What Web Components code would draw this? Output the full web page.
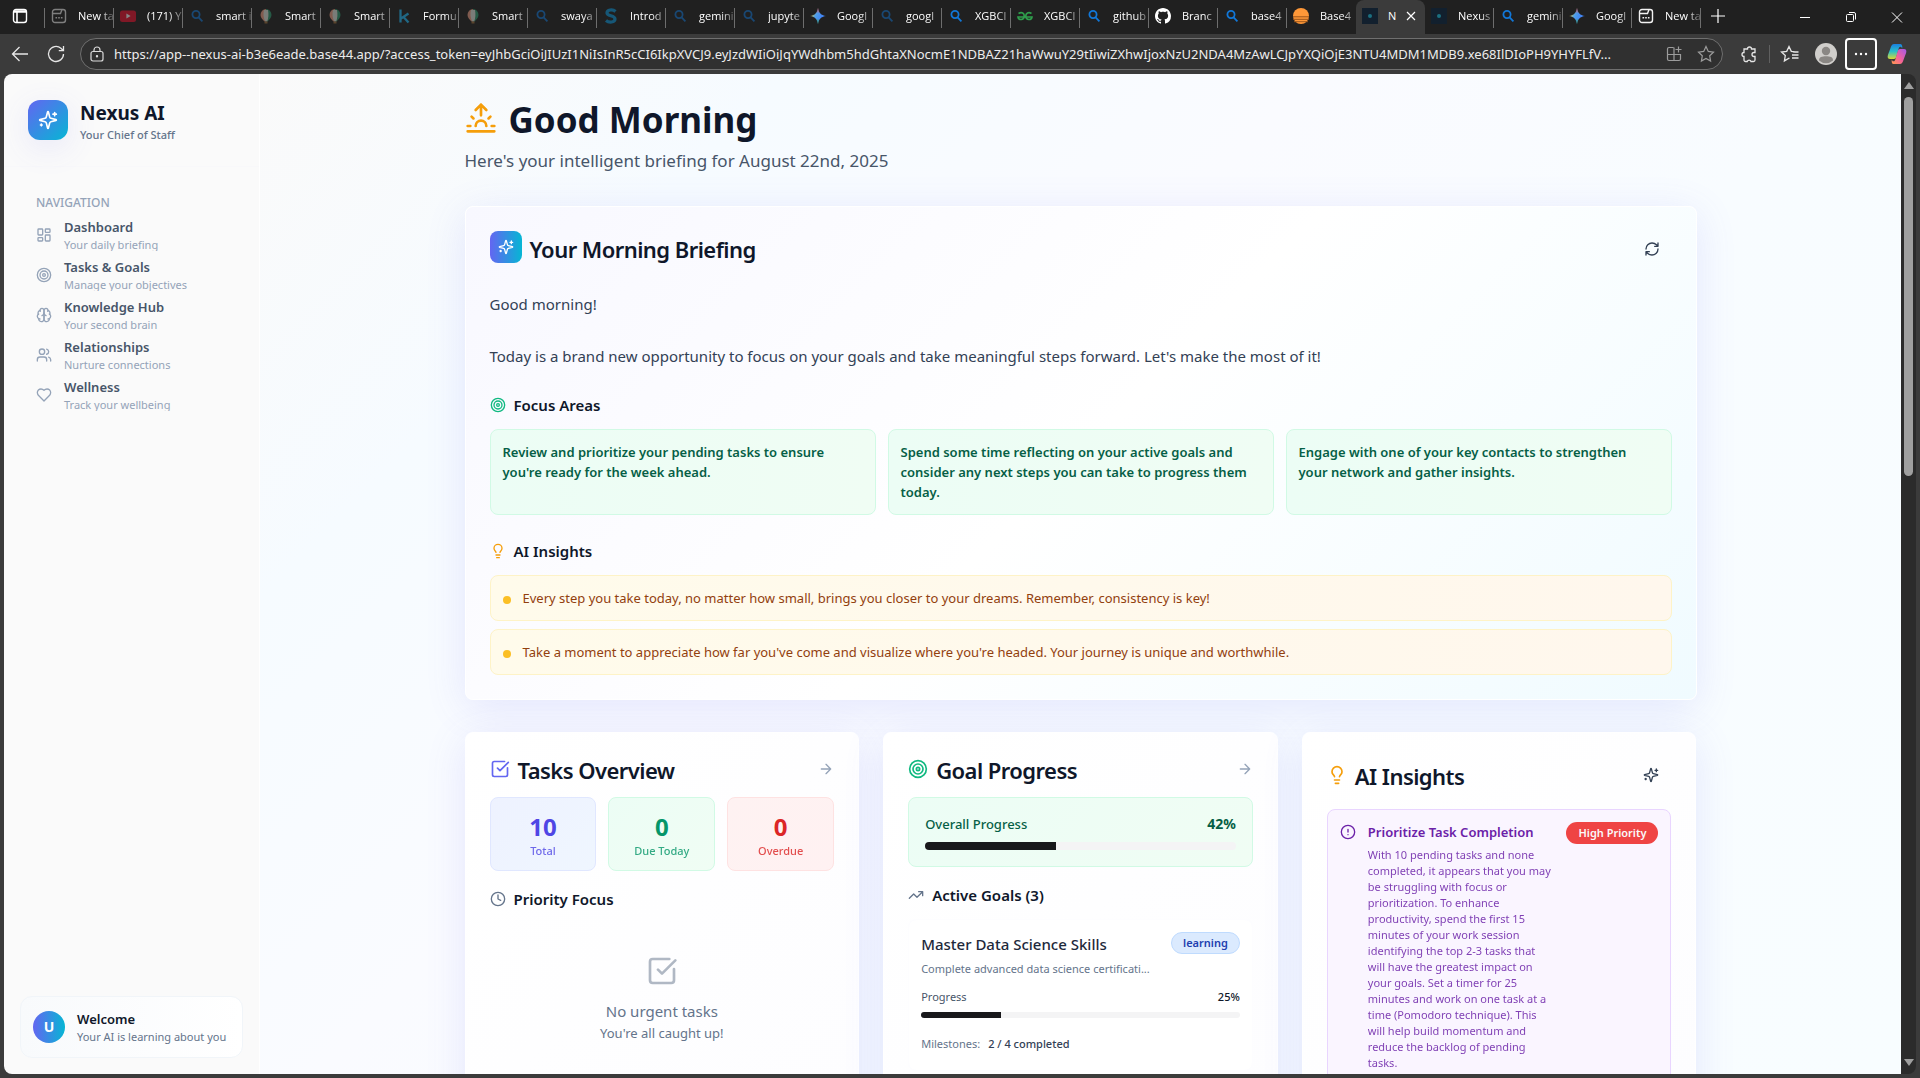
<!DOCTYPE html>
<html lang="en">
<head>
<meta charset="utf-8">
<title>Nexus AI</title>
<style>
html,body{margin:0;height:100%;overflow:hidden;background:#3b3b3b}
body{font-family:"Noto Sans","Open Sans",sans-serif;font-size:14px;line-height:20px;color:#0f172a}
</style>
</head>
<body>
<browser-window></browser-window>
<script>
const RESET = '*{box-sizing:border-box}h1,h2,h3,h4,p,ul{margin:0;padding:0}ul{list-style:none}button{font:inherit;color:inherit;background:none;border:0;padding:0;margin:0}a{color:inherit;text-decoration:none}:host([hidden]){display:none}';
function define(name, css, html){
  customElements.define(name, class extends HTMLElement{
    constructor(){
      super();
      const markup = typeof html === 'function' ? html(this) : html;
      this.attachShadow({mode:'open'}).innerHTML = '<style>'+RESET+css+'</style>'+markup;
    }
  });
}

const ICONS = {
  sparkles:'<path d="M9.937 15.5A2 2 0 0 0 8.5 14.063l-6.135-1.582a.5.5 0 0 1 0-.962L8.5 9.936A2 2 0 0 0 9.937 8.5l1.582-6.135a.5.5 0 0 1 .963 0L14.063 8.5A2 2 0 0 0 15.5 9.937l6.135 1.581a.5.5 0 0 1 0 .964L15.5 14.063a2 2 0 0 0-1.437 1.437l-1.582 6.135a.5.5 0 0 1-.963 0z"/><path d="M20 3v4M22 5h-4M4 17v2M5 18H3"/>',
  dashboard:'<rect x="3" y="3" width="7" height="9" rx="1"/><rect x="14" y="3" width="7" height="5" rx="1"/><rect x="14" y="12" width="7" height="9" rx="1"/><rect x="3" y="16" width="7" height="5" rx="1"/>',
  target:'<circle cx="12" cy="12" r="10"/><circle cx="12" cy="12" r="6"/><circle cx="12" cy="12" r="2"/>',
  brain:'<path d="M12 5a3 3 0 1 0-5.997.125 4 4 0 0 0-2.526 5.77 4 4 0 0 0 .556 6.588A4 4 0 1 0 12 18Z"/><path d="M12 5a3 3 0 1 1 5.997.125 4 4 0 0 1 2.526 5.77 4 4 0 0 1-.556 6.588A4 4 0 1 1 12 18Z"/><path d="M15 13a4.5 4.5 0 0 1-3-4 4.5 4.5 0 0 1-3 4M17.599 6.5a3 3 0 0 0 .399-1.375M6.003 5.125A3 3 0 0 0 6.401 6.5M3.477 10.896a4 4 0 0 1 .585-.396M19.938 10.5a4 4 0 0 1 .585.396M6 18a4 4 0 0 1-1.967-.516M19.967 17.484A4 4 0 0 1 18 18"/>',
  users:'<path d="M16 21v-2a4 4 0 0 0-4-4H6a4 4 0 0 0-4 4v2"/><circle cx="9" cy="7" r="4"/><path d="M22 21v-2a4 4 0 0 0-3-3.87M16 3.13a4 4 0 0 1 0 7.75"/>',
  heart:'<path d="M19 14c1.49-1.46 3-3.21 3-5.5A5.5 5.5 0 0 0 16.5 3c-1.76 0-3 .5-4.5 2-1.5-1.5-2.74-2-4.5-2A5.5 5.5 0 0 0 2 8.5c0 2.3 1.5 4.05 3 5.5l7 7Z"/>',
  sunrise:'<path d="M12 2v8M4.93 10.93l1.41 1.41M2 18h2M20 18h2M19.07 10.93l-1.41 1.41M22 22H2M8 6l4-4 4 4M16 18a4 4 0 0 0-8 0"/>',
  refresh:'<path d="M3 12a9 9 0 0 1 9-9 9.75 9.75 0 0 1 6.74 2.74L21 8M21 3v5h-5M21 12a9 9 0 0 1-9 9 9.75 9.75 0 0 1-6.74-2.74L3 16M8 16H3v5"/>',
  bulb:'<path d="M15 14c.2-1 .7-1.7 1.5-2.5 1-.9 1.5-2.2 1.5-3.5A6 6 0 0 0 6 8c0 1 .2 2.2 1.5 3.5.7.7 1.3 1.5 1.5 2.5M9 18h6M10 22h4"/>',
  check:'<path d="M21 10.5V19a2 2 0 0 1-2 2H5a2 2 0 0 1-2-2V5a2 2 0 0 1 2-2h12.5M9 11l3 3L22 4"/>',
  clock:'<circle cx="12" cy="12" r="10"/><path d="M12 6v6l4 2"/>',
  trend:'<path d="M22 7l-8.5 8.5-5-5L2 17M16 7h6v6"/>',
  alert:'<circle cx="12" cy="12" r="10"/><path d="M12 8v4M12 16h.01"/>',
  arrow:'<path d="M5 12h14M12 5l7 7-7 7"/>'
};
define('line-icon', ':host{display:block;flex:none;width:16px;height:16px}:host([size="20"]){width:20px;height:20px}:host([size="32"]){width:32px;height:32px}svg{display:block;width:100%;height:100%;fill:none;stroke:currentColor;stroke-width:2;stroke-linecap:round;stroke-linejoin:round}',
  el => '<svg viewBox="0 0 24 24" aria-hidden="true">'+ICONS[el.getAttribute('name')]+'</svg>');

/* ---------- browser chrome ---------- */
const FAVICONS = {
  page:'<g fill="none" stroke="currentColor" stroke-width="1.4"><rect x="1.5" y="1.5" width="13" height="13" rx="2.5"/><path d="M2 5.5h7.5l1.500-4"/></g><path d="M4.500 9h1.600v1.600H4.500zM7.200 9h1.600v1.600H7.200zM9.900 9h1.600v1.600H9.900z" fill="currentColor"/>',
  youtube:'<rect y="2.5" width="16" height="11.5" rx="2.5" fill="#f5102f"/><path d="M6.4 5.6v5l4.2-2.5z" fill="#fff"/>',
  search:'<g fill="none" stroke="#1177d8" stroke-width="1.8"><circle cx="7" cy="6.5" r="3.6"/><path d="M9.6 9.3l3.8 4"/></g>',
  balloon:'<path d="M8 1a5.5 6 0 0 0-5.5 6c0 3 2.6 5 4 6.5h1.5z" fill="#f7a488"/><path d="M8 1a5.5 6 0 0 1 5.5 6c0 3-2.6 5-4 6.5H8z" fill="#2f9f73"/><path d="M6 2c-1 4-.5 8 1.2 11.5h2C10.5 10 10.8 6 10 2z" fill="#e7ede3"/><rect x="6.5" y="13.5" width="3" height="2" fill="#a0703c"/>',
  kaggle:'<path d="M4.5 1.5v13M12.5 5.5l-7.5 5M7.500 9l5 5.500" stroke="#20beff" stroke-width="2.3" fill="none"/>',
  swirl:'<path d="M12.5 3.5C9.5.8 4 1.8 4 5c0 3.500 8 2 8 6 0 3.500-6 4-9 1.500" fill="none" stroke="#0a9be0" stroke-width="3.2"/>',
  gemini:'<defs><linearGradient id="g" x1="0" x2="1" y1=".3" y2=".7"><stop offset="0" stop-color="#fbbc04"/><stop offset=".35" stop-color="#4f9fe8"/><stop offset=".7" stop-color="#4285f4"/></linearGradient><linearGradient id="v" x1="0" x2="0" y1="0" y2="1"><stop offset="0" stop-color="#f44336"/><stop offset=".35" stop-color="#f44336" stop-opacity="0"/><stop offset=".65" stop-color="#34a853" stop-opacity="0"/><stop offset="1" stop-color="#34a853"/></linearGradient></defs><path d="M8 0c.8 5 3 7.200 8 8-5 .8-7.200 3-8 8-.8-5-3-7.200-8-8 5-.8 7.200-3 8-8z" fill="url(#g)"/><path d="M8 0c.8 5 3 7.200 8 8-5 .8-7.200 3-8 8-.8-5-3-7.200-8-8 5-.8 7.200-3 8-8z" fill="url(#v)"/>',
  geeks:'<path d="M1.500 5.500C5 3.500 7.300 5.500 7.200 8c0 4.500-6 4.500-6.200 1h14c-.2 3.500-6.200 3.500-6.200-1 0-2.500 2.500-4.500 5.700-2.500" fill="none" stroke="#2f9e4c" stroke-width="1.7"/>',
  github:'<path fill="#fff" d="M8 0C3.580 0 0 3.580 0 8c0 3.540 2.290 6.530 5.470 7.590.4.070.55-.17.550-.380 0-.190-.010-.820-.010-1.490-2.010.370-2.530-.490-2.690-.940-.090-.230-.480-.940-.820-1.130-.280-.150-.680-.520-.010-.530.630-.010 1.080.580 1.230.820.720 1.210 1.870.870 2.330.660.070-.520.280-.870.510-1.070-1.780-.2-3.640-.890-3.640-3.950 0-.870.310-1.590.820-2.150-.080-.2-.360-1.020.080-2.120 0 0 .670-.210 2.200.820.640-.180 1.320-.270 2-.270s1.360.090 2 .270c1.530-1.040 2.200-.820 2.200-.820.440 1.100.160 1.920.080 2.120.510.560.820 1.270.820 2.150 0 3.070-1.870 3.750-3.650 3.950.290.250.540.730.540 1.480 0 1.070-.010 1.930-.010 2.200 0 .210.150.460.550.380A8.010 8.010 0 0 0 16 8c0-4.420-3.580-8-8-8z"/>',
  base:'<circle cx="8" cy="8" r="8" fill="#ff9838"/><path d="M0 8.800h16M0 11.300h16M1 13.700h14" stroke="#9c551b" stroke-width="1"/>',
  nexus:'<rect width="16" height="16" fill="#12202e"/><circle cx="8" cy="8" r="2" fill="#1c6f80"/>'
};
define('browser-tab', `
:host{display:flex;flex:0 0 69px;align-items:center;gap:11px;height:34px;padding:0 0 2px 6px;overflow:hidden;background:linear-gradient(#6e6e6e,#6e6e6e) right 8px/1px 20px no-repeat;font-family:"Open Sans","Noto Sans",sans-serif;font-size:11px;line-height:20px;color:#fff}
:host([active]){background:#3b3b3b;border-radius:8px 8px 0 0;gap:10px}
:host([plain]){background:none}
svg{flex:none;width:16px;height:16px;display:block;color:#f2f2f2}
:host([asleep]) svg{opacity:.45}
a{flex:1;min-width:0;white-space:nowrap;-webkit-mask:linear-gradient(90deg,#000 60%,rgba(0,0,0,.2))}
:host([active]) a{flex:none;-webkit-mask:none}
button{display:none;width:10px;height:10px}
:host([active]) button{display:block}
button svg{width:10px;height:10px}`,
el => '<svg viewBox="0 0 16 16">'+FAVICONS[el.getAttribute('icon')]+'</svg><a href="#"><slot></slot></a><button aria-label="Close tab"><svg viewBox="0 0 10 10"><path d="M1 1l8 8M9 1L1 9" stroke="#fff" stroke-width="1.2"/></svg></button>');

const TABS = [['page','New ta','asleep'],['youtube','(171) Y','asleep'],['search','smart i','asleep'],['balloon','Smart','asleep'],['balloon','Smart','asleep'],['kaggle','Formu','asleep'],['balloon','Smart','asleep'],['search','swaya','asleep'],['swirl','Introd','asleep'],['search','gemini','asleep'],['search','jupyte','asleep'],['gemini','Googl',''],['search','googl','asleep'],['search','XGBCl',''],['geeks','XGBCl',''],['search','github',''],['github','Branc',''],['search','base4',''],['base','Base4','plain'],['nexus','N','active'],['nexus','Nexus',''],['search','gemini',''],['gemini','Googl',''],['page','New ta','']];
define('tab-strip', `
:host{display:flex;height:34px;background:#202020;align-items:center}
.side{flex:none;width:45px;height:34px;display:grid;align-items:center;background:linear-gradient(#6e6e6e,#6e6e6e) right 8px/1px 20px no-repeat;padding:0 0 2px 12px}
svg{display:block;width:16px;height:16px;fill:none;stroke:#fff}
.new{width:34px;height:34px;display:grid;place-items:center;padding-bottom:2px}
.win{margin-left:auto;display:flex}
.win button{width:46px;height:34px;display:grid;place-items:center}`,
`<button class="side" aria-label="Tab actions"><svg viewBox="0 0 16 16"><rect x="1.5" y="1.5" width="13" height="13" rx="2.5" stroke-width="1.4"/><path d="M1.5 4h13M2 3h12M5 4v10" stroke-width="1.6"/></svg></button>`
+TABS.map(t=>`<browser-tab icon="${t[0]}" ${t[2]}>${t[1]}</browser-tab>`).join('')+
`<button class="new" aria-label="New tab"><svg viewBox="0 0 16 16"><path d="M8 1v14M1 8h14" stroke-width="1.2"/></svg></button>
<div class="win"><button aria-label="Minimize"><svg viewBox="0 0 16 16"><path d="M3 8.5h10"/></svg></button><button aria-label="Restore"><svg viewBox="0 0 16 16"><rect x="3.5" y="5.5" width="7" height="7" rx="1"/><path d="M6 3.5h5a1.500 1.500 0 0 1 1.500 1.500v5.500"/></svg></button><button aria-label="Close"><svg viewBox="0 0 16 16"><path d="M3 3.5l10 10M13 3.5l-10 10"/></svg></button></div>`);

const URL_TEXT = 'https://app--nexus-ai-b3e6eade.base44.app/?access_token=eyJhbGciOiJIUzI1NiIsInR5cCI6IkpXVCJ9.eyJzdWIiOiJqYWdhbm5hdGhtaXNocmE1NDBAZ21haWwuY29tIiwiZXhwIjoxNzU2NDA4MzAwLCJpYXQiOjE3NTU4MDM1MDB9.xe68IlDIoPH9YHYFLfV...';
define('address-bar', `
:host{display:flex;height:40px;align-items:center;background:#3b3b3b;padding:0 6px 0 2px}
svg{display:block;fill:none;stroke:#e6e6e6;stroke-width:1.3;width:20px;height:20px}
button{flex:none;width:36px;height:32px;display:grid;place-items:center}
form{flex:1;min-width:0;height:32px;border:1px solid #6f6f6f;border-radius:16px;background:#303030;display:flex;align-items:center;margin:0 8px 0 6px}
form button{width:32px}
form svg{stroke:#9c9c9c;stroke-width:1.2}
form .lock svg{stroke:#dadada}
input{flex:1;min-width:0;border:0;outline:0;padding:0;margin:0 6px 0 1px;background:none;color:#ededed;font:13px/20px "Noto Sans","Open Sans",sans-serif;height:24px}
.sep{width:1px;height:18px;background:#606060;margin:0 2px}
.menu{border:2px solid #fff;border-radius:4px;width:32px;margin:0 3px 0 1px}
.pilot{width:34px}
.who svg{width:22px;height:22px}`,
`<button aria-label="Back"><svg viewBox="0 0 20 20"><path d="M18 10H2.500M9.500 3l-7 7 7 7"/></svg></button>
<button aria-label="Refresh"><svg viewBox="0 0 20 20"><path d="M17.500 10a7.500 7.500 0 1 1-2.600-5.700L17.300 6.500M17.500 2v4.700h-4.700"/></svg></button>
<form><button class="lock" type="button" aria-label="Site information"><svg viewBox="0 0 20 20"><rect x="4" y="7.5" width="12" height="9.5" rx="2"/><path d="M7 7.500V6a3 3 0 0 1 6 0v1.500"/><circle cx="10" cy="12.2" r=".6" fill="#dadada"/></svg></button>
<input type="text" aria-label="Address" value="${URL_TEXT}">
<button type="button" aria-label="Install app"><svg viewBox="0 0 20 20"><path d="M9.500 3.500H5A1.500 1.500 0 0 0 3.500 5v10A1.500 1.500 0 0 0 5 16.500h10a1.500 1.500 0 0 0 1.500-1.500v-4.500h-13M10 3.500v13M14.500 2.500v6M11.500 5.500h6"/></svg></button>
<button type="button" aria-label="Add to favorites"><svg viewBox="0 0 20 20"><path d="M10 2.500l2.300 4.900 5.200.7-3.800 3.700.9 5.300-4.600-2.600-4.600 2.600.9-5.300L2.500 8.100l5.200-.7z"/></svg></button></form>
<button aria-label="Extensions"><svg viewBox="0 0 20 20"><path d="M5 5h3.500a2 2 0 1 1 4 0H16v3.500h-1a2 2 0 1 0 0 4h1V16a1.500 1.500 0 0 1-1.500 1.500H12a2 2 0 0 0-3.800 0H6.500A1.500 1.500 0 0 1 5 16v-3.500a2 2 0 1 1 0-4z"/></svg></button><span class="sep"></span>
<button aria-label="Favorites"><svg viewBox="0 0 20 20"><path d="M9.500 14.500l-.5-.2-4.600 2.600.9-5.300L1.500 8l5.200-.7L9 2.500l2.300 4.800 3.700.5M12 11h6.500M12 14h6.500M13 8h5.500"/></svg></button>
<button class="who" aria-label="Profile"><svg viewBox="0 0 22 22" stroke="none"><circle cx="11" cy="11" r="11" fill="#d0cecb" stroke="none"/><circle cx="11" cy="8" r="4.2" fill="#8a8784" stroke="none"/><path d="M4 17.500C4 14 7 13.300 11 13.300s7 .7 7 4.200a10.500 10.500 0 0 1-14 0z" fill="#8a8784" stroke="none"/></svg></button>
<button class="menu" aria-label="Settings and more"><svg viewBox="0 0 20 20"><g fill="#fff" stroke="none"><circle cx="5" cy="10" r="1.2"/><circle cx="10" cy="10" r="1.2"/><circle cx="15" cy="10" r="1.2"/></g></svg></button>
<button class="pilot" aria-label="Copilot"><svg viewBox="0 0 22 22"><defs><linearGradient id="a" x1="0" x2="0" y1="0" y2="1"><stop stop-color="#1a7fe0"/><stop offset=".5" stop-color="#2bc0c8"/><stop offset="1" stop-color="#d9d834"/></linearGradient><linearGradient id="b" x1="1" x2="0" y1="0" y2="1"><stop stop-color="#a259e8"/><stop offset=".55" stop-color="#f4619a"/><stop offset="1" stop-color="#ff9a4a"/></linearGradient></defs><path d="M15 0H8C5.500 0 4.500 2 3.700 5L1 12c-.8 2.700 0 4.500 2.500 4.500h4c2 0 2.600-1.800 3.300-4.500l1.900-6.500c.5-1.800 1-2.500 2-2.500 1.400 0 1.500 1 2 2C17.200 2.500 16.500 0 15 0z" fill="url(#a)" stroke="none"/><path d="M7 22h7c2.500 0 3.500-2 4.300-5L21 10c.8-2.700 0-4.500-2.500-4.500h-4c-2 0-2.600 1.800-3.300 4.500l-1.900 6.500c-.5 1.800-1 2.500-2 2.500-1.400 0-1.500-1-2-2C4.800 19.500 5.500 22 7 22z" fill="url(#b)" stroke="none"/></svg></button>`);

define('scroll-rail', `
:host{display:flex;flex-direction:column;align-items:center;width:15px;background:#2b2b2b;padding:8px 0}
i{width:0;height:0;border:5px solid transparent;flex:none}
.up{border-top:0;border-bottom:7px solid #9f9f9f}
.down{border-bottom:0;border-top:7px solid #9f9f9f;margin-top:auto}
.thumb{width:9px;flex:0 0 38.5%;border-radius:5px;background:#9f9f9f;margin-top:8px}`,
'<i class="up"></i><span class="thumb"></span><i class="down"></i>');

/* ---------- sidebar ---------- */
define('nav-item', `
:host{display:block;height:32px;margin-bottom:8px}
a{display:flex;align-items:center;gap:12px;height:32px;padding:0 12px;overflow:hidden}
line-icon{color:#94a3b8}
b{display:block;font-weight:600;font-size:13px;line-height:20px;color:#475569}
small{display:block;font-size:11px;line-height:16px;color:#94a3b8}
a>span{display:block}`,
el => `<a href="#"><line-icon name="${el.getAttribute('icon')}"></line-icon><span><b><slot></slot></b><small>${el.getAttribute('note')}</small></span></a>`);

define('app-sidebar', `
:host{display:flex;flex-direction:column;width:256px;flex:none;background:#fafafa;border-right:1px solid #fff}
header{display:flex;align-items:center;gap:12px;padding:24px;border-bottom:1px solid #f8f8fa}
.logo{width:40px;height:40px;border-radius:12px;display:grid;place-items:center;color:#fff;background:linear-gradient(135deg,#6366f1,#06b6d4);box-shadow:0 8px 32px rgba(99,102,241,.12)}
h2{font-size:19px;line-height:30px;font-weight:700}
header p{font-size:11px;line-height:14px;color:#64748b;font-weight:500}
nav{padding:20px;flex:1}
h3{font-size:12px;line-height:32px;padding:0 12px;font-weight:500;color:#94a3b8}
footer{padding:16px}
.card{display:flex;align-items:center;gap:12px;padding:12px;border:1px solid #f1f5f9;border-radius:12px;background:linear-gradient(90deg,#f8fafc,#fff)}
.avatar{flex:none;width:32px;height:32px;border-radius:50%;display:grid;place-items:center;color:#fff;font-weight:700;font-size:14px;background:linear-gradient(90deg,#6366f1,#06b6d4)}
.card b{display:block;font-size:13px;line-height:20px;font-weight:600}
.card small{display:block;font-size:11px;line-height:16px;color:#64748b;white-space:nowrap}`,
`<header><span class="logo"><line-icon name="sparkles" size="20"></line-icon></span><div><h2>Nexus AI</h2><p>Your Chief of Staff</p></div></header>
<nav><h3>NAVIGATION</h3>
<nav-item icon="dashboard" note="Your daily briefing">Dashboard</nav-item>
<nav-item icon="target" note="Manage your objectives">Tasks &amp; Goals</nav-item>
<nav-item icon="brain" note="Your second brain">Knowledge Hub</nav-item>
<nav-item icon="users" note="Nurture connections">Relationships</nav-item>
<nav-item icon="heart" note="Track your wellbeing">Wellness</nav-item></nav>
<footer><div class="card"><span class="avatar">U</span><div><b>Welcome</b><small>Your AI is learning about you</small></div></div></footer>`);

/* ---------- dashboard parts ---------- */
define('surface-card', `
:host{display:block;min-width:0;border:1px solid #fff;border-radius:8px;padding:24px;background:linear-gradient(135deg,#fff,#fdfdff);box-shadow:0 8px 40px rgba(99,102,241,.14)}
:host([tinted]){background:linear-gradient(135deg,#f8f8ff,#fff 50%,#f0fbff)}`, '<slot></slot>');

define('section-title', `
:host{display:flex;align-items:center;gap:8px;font-size:15px;line-height:24px;font-weight:600;color:#0f172a}
h3{font:inherit}line-icon{color:var(--tone,#64748b)}`,
el => `<line-icon name="${el.getAttribute('icon')}"></line-icon><h3><slot></slot></h3>`);

define('card-heading', `
:host{display:flex;align-items:flex-start}
h2{flex:1;height:24px;display:flex;align-items:center;gap:8px;font-size:22px;line-height:24px;font-weight:600;letter-spacing:-.025em;white-space:nowrap}
h2 span{padding-top:2px}
:host([tall]) h2{height:36px}
line-icon[size]{color:var(--tone)}
button,a{display:grid;place-items:center;width:16px;height:24px;color:#94a3b8}
:host([tall]) button{width:40px;height:36px;color:#334155}`,
el => `<h2><line-icon size="20" name="${el.getAttribute('icon')}"></line-icon><span><slot></slot></span></h2>`+
 (el.hasAttribute('tall') ? `<button aria-label="Generate insights"><line-icon name="sparkles"></line-icon></button>` : `<a href="#" aria-label="Open"><line-icon name="arrow"></line-icon></a>`));

define('focus-box', `
:host{display:block;padding:12px 20px 12px 12px;border:1px solid #d1fae5;border-radius:8px;background:linear-gradient(90deg,#ecfdf5,#f0fdf4);color:#065f46;font-size:13px;line-height:20px;font-weight:600}`, '<slot></slot>');

define('insight-row', `
:host{display:flex;align-items:flex-start;gap:12px;padding:12px;border:1px solid #fef3c7;border-radius:8px;background:linear-gradient(90deg,#fffbeb,#fff7ed);color:#92400e;font-size:13px;line-height:20px}
i{flex:none;width:8px;height:8px;margin-top:8px;border-radius:50%;background:#fbbf24}`, '<i></i><span><slot></slot></span>');

define('briefing-card', `
:host{display:block}
header{display:flex;align-items:flex-start;gap:8px;margin-bottom:24px}
.logo{width:32px;height:32px;border-radius:8px;display:grid;place-items:center;color:#fff;background:linear-gradient(90deg,#6366f1,#06b6d4)}
h2{flex:1;font-size:22px;line-height:36px;font-weight:600;letter-spacing:-.025em}
button{width:40px;height:36px;display:grid;place-items:center;color:#334155}
.text{font-size:15px;line-height:26px;color:#334155;white-space:pre-line;margin-bottom:24px}
section-title{margin-bottom:12px}
.focus{display:grid;grid-template-columns:repeat(3,1fr);gap:12px;margin-bottom:24px}
.rows{display:grid;gap:8px}
.green{--tone:#10b981}.amber{--tone:#f59e0b}`,
`<surface-card tinted><header><span class="logo"><line-icon name="sparkles"></line-icon></span><h2>Your Morning Briefing</h2><button aria-label="Refresh briefing"><line-icon name="refresh"></line-icon></button></header>
<p class="text">Good morning!

Today is a brand new opportunity to focus on your goals and take meaningful steps forward. Let's make the most of it!</p>
<section-title class="green" icon="target">Focus Areas</section-title>
<div class="focus"><focus-box>Review and prioritize your pending tasks to ensure you're ready for the week ahead.</focus-box><focus-box>Spend some time reflecting on your active goals and consider any next steps you can take to progress them today.</focus-box><focus-box>Engage with one of your key contacts to strengthen your network and gather insights.</focus-box></div>
<section-title class="amber" icon="bulb">AI Insights</section-title>
<div class="rows"><insight-row>Every step you take today, no matter how small, brings you closer to your dreams. Remember, consistency is key!</insight-row><insight-row>Take a moment to appreciate how far you've come and visualize where you're headed. Your journey is unique and worthwhile.</insight-row></div></surface-card>`);

define('stat-tile', `
:host{display:block;padding:12px;border:1px solid var(--edge);border-radius:8px;background:var(--fill);text-align:center;color:var(--ink)}
b{display:block;font-size:24px;line-height:34px;font-weight:700}
span{display:block;font-size:11px;line-height:14px;font-weight:500;opacity:.8}
:host([tone=indigo]){--edge:#e0e7ff;--fill:linear-gradient(135deg,#eef2ff,#eff6ff);--ink:#4f46e5}
:host([tone=green]){--edge:#d1fae5;--fill:linear-gradient(135deg,#ecfdf5,#f0fdf4);--ink:#059669}
:host([tone=red]){--edge:#fee2e2;--fill:linear-gradient(135deg,#fef2f2,#fff1f2);--ink:#dc2626}`,
el => `<b>${el.getAttribute('value')}</b><span><slot></slot></span>`);

define('tasks-card', `
:host{display:grid}
.stats{display:grid;grid-template-columns:repeat(3,1fr);gap:12px;margin:16px 0}
card-heading{--tone:#6366f1}
.empty{display:flex;flex-direction:column;align-items:center;padding:32px 0;margin-top:12px;color:#64748b;text-align:center}
.empty line-icon{opacity:.5;margin-bottom:12px}
.empty p{font-size:15px;line-height:24px}.empty small{font-size:13px;line-height:20px}`,
`<surface-card><card-heading icon="check">Tasks Overview</card-heading>
<div class="stats"><stat-tile tone="indigo" value="10">Total</stat-tile><stat-tile tone="green" value="0">Due Today</stat-tile><stat-tile tone="red" value="0">Overdue</stat-tile></div>
<section-title icon="clock">Priority Focus</section-title>
<div class="empty"><line-icon name="check" size="32"></line-icon><p>No urgent tasks</p><small>You're all caught up!</small></div></surface-card>`);

define('progress-bar', `
:host{display:block;height:8px;border-radius:4px;overflow:hidden;background:#f4f4f5}
:host([thin]){height:6px}
i{display:block;height:100%;background:#18181b}`,
el => `<i role="progressbar" aria-valuenow="${el.getAttribute('value')}" style="width:${el.getAttribute('value')}%"></i>`);

define('goals-card', `
:host{display:grid}
card-heading{--tone:#10b981}
.overall{margin:16px 0;padding:16px;border:1px solid #d1fae5;border-radius:8px;background:linear-gradient(135deg,#ecfdf5,#f0fdf4);color:#065f46}
.line{display:flex;justify-content:space-between;align-items:center}
.overall .line{font-size:13px;line-height:20px;font-weight:500;margin-bottom:8px}
.overall b{font-size:14px;font-weight:700}
.goal{margin-top:12px;padding:12px;border:1px solid #fdfdff;border-radius:8px;background:#fff}
.goal .line{align-items:flex-start}
h4{font-size:15px;line-height:24px;font-weight:500;color:#1e293b}
.badge{padding:2px 11px;border:1px solid #bfdbfe;border-radius:11px;background:#dbeafe;color:#1e40af;font-size:11px;line-height:16px;font-weight:600}
.note{margin:5px 0 12px;font-size:11px;line-height:16px;color:#64748b}
.small{font-size:11px;line-height:16px;color:#475569;margin-bottom:7px}
.small b{font-weight:500;color:#0f172a}
.miles{display:flex;align-items:center;gap:8px;height:28px;margin-top:12px;font-size:11px;color:#64748b}
.miles b{font-weight:500;color:#334155}`,
`<surface-card><card-heading icon="target">Goal Progress</card-heading>
<div class="overall"><div class="line"><span>Overall Progress</span><b>42%</b></div><progress-bar value="42"></progress-bar></div>
<section-title icon="trend">Active Goals (3)</section-title>
<article class="goal"><div class="line"><h4>Master Data Science Skills</h4><span class="badge">learning</span></div>
<p class="note">Complete advanced data science certificati...</p>
<div class="line small"><span>Progress</span><b>25%</b></div><progress-bar thin value="25"></progress-bar>
<div class="miles"><span>Milestones:</span><b>2 / 4 completed</b></div></article></surface-card>`);

define('insights-card', `
:host{display:grid}
card-heading{--tone:#f59e0b;margin-bottom:16px}
.alert{display:flex;align-items:flex-start;gap:8px;padding:12px;border:1px solid #e9d5ff;border-radius:8px;background:#faf5ff;color:#6b21a8}
line-icon{margin:2px 4px 0 0}
.body{flex:1;min-width:0}
h4{font-size:13px;line-height:20px;font-weight:600;margin-bottom:5px;white-space:nowrap}
p{font-size:11px;line-height:16px;opacity:.85;white-space:pre}
.badge{flex:none;padding:3px 12px;border-radius:11px;background:#ef4444;color:#fafafa;font-size:11px;line-height:16px;font-weight:600}`,
`<surface-card><card-heading tall icon="bulb">AI Insights</card-heading>
<article class="alert"><line-icon name="alert"></line-icon><div class="body"><h4>Prioritize Task Completion</h4><p>With 10 pending tasks and none
completed, it appears that you may
be struggling with focus or
prioritization. To enhance
productivity, spend the first 15
minutes of your work session
identifying the top 2-3 tasks that
will have the greatest impact on
your goals. Set a timer for 25
minutes and work on one task at a
time (Pomodoro technique). This
will help build momentum and
reduce the backlog of pending
tasks.</p></div><span class="badge">High Priority</span></article></surface-card>`);

define('dashboard-page', `
:host{display:block;flex:1;min-width:0;overflow:hidden;background:linear-gradient(135deg,#fafafa,#f6fbff 20%,#fafbff 40%,#f8fcff 60%,#f8fdff)}
main{max-width:1280px;margin:0 auto;padding:24px}
h1{display:flex;align-items:flex-start;gap:12px;font-size:35px;line-height:44px;font-weight:700;margin-bottom:4px}
h1 line-icon{color:#f59e0b;margin-top:4px}
.sub{font-size:17px;line-height:30px;color:#475569;margin-bottom:30px}
.cols{display:grid;grid-template-columns:repeat(3,minmax(0,1fr));gap:24px;margin-top:32px}`,
`<main><h1><line-icon name="sunrise" size="32"></line-icon>Good Morning</h1><p class="sub">Here's your intelligent briefing for August 22nd, 2025</p>
<briefing-card></briefing-card><div class="cols"><tasks-card></tasks-card><goals-card></goals-card><insights-card></insights-card></div></main>`);

define('browser-window', `
:host{display:flex;flex-direction:column;height:100vh;background:#3b3b3b}
tab-strip,address-bar{flex:none}
.view{flex:1;min-height:0;display:flex;margin:0 4px 4px;border-radius:8px;overflow:hidden}`,
`<tab-strip></tab-strip><address-bar></address-bar><div class="view"><app-sidebar></app-sidebar><dashboard-page></dashboard-page><scroll-rail></scroll-rail></div>`);
</script>
</body>
</html>
